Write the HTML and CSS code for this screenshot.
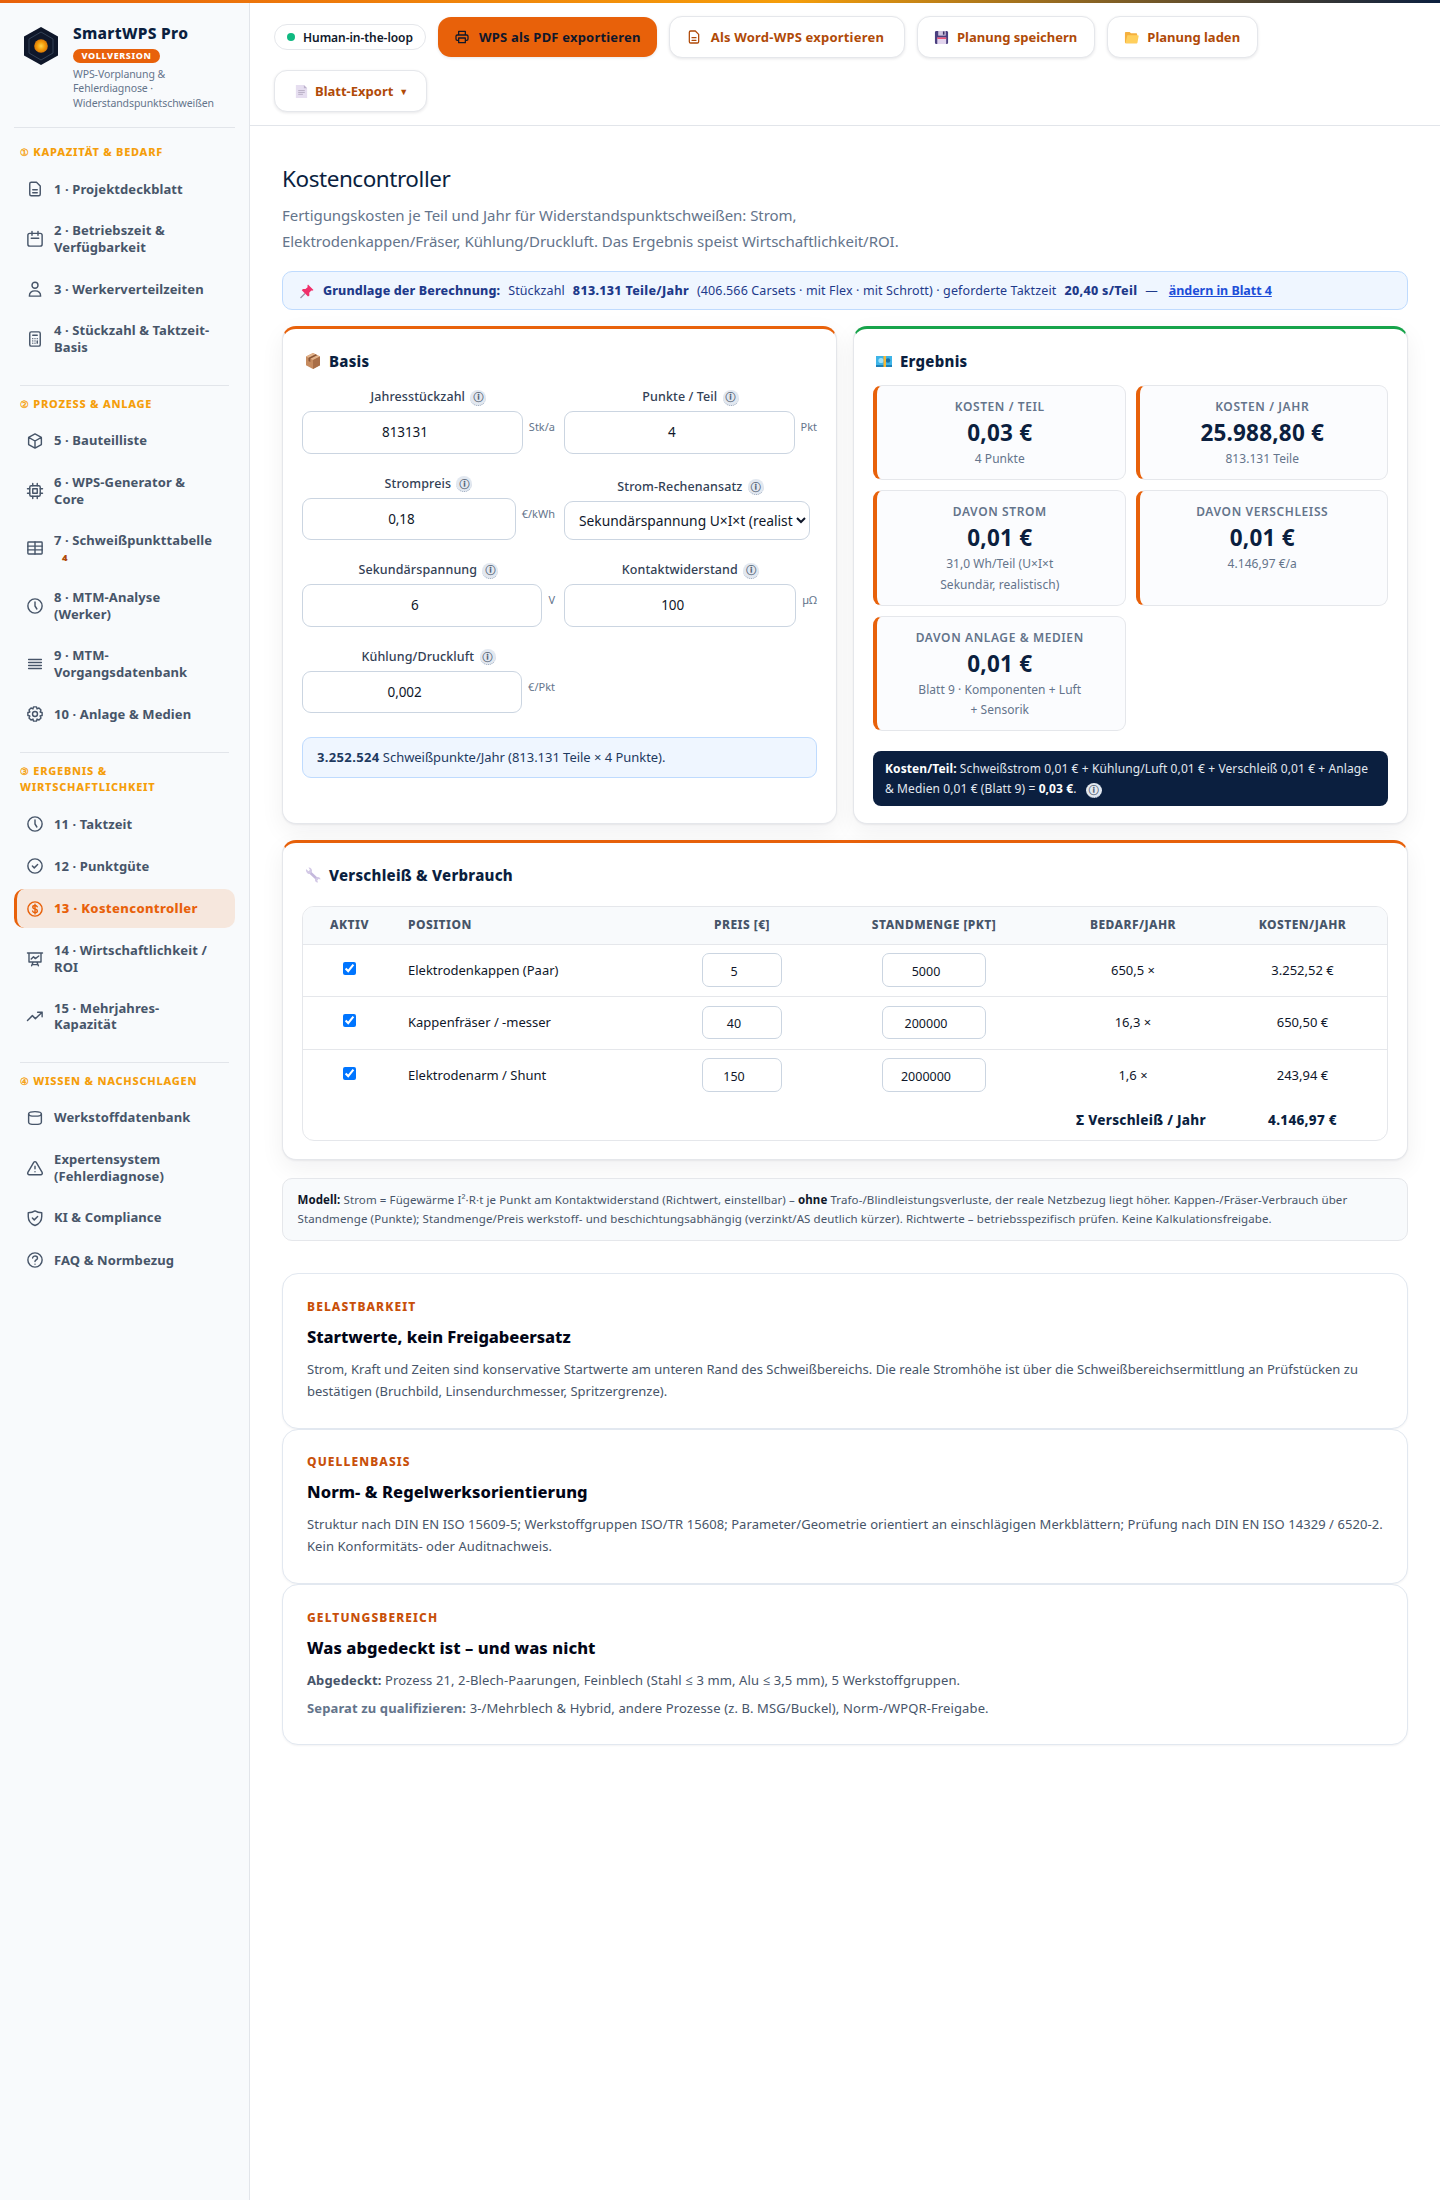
FILE: index.html
```html
<!DOCTYPE html>
<html lang="de">
<head>
<meta charset="UTF-8" />
<meta name="viewport" content="width=device-width,initial-scale=1.0" />
<title>SmartWPS Pro – Kostencontroller</title>
<link rel="stylesheet" href="styles.css">
</head>
<body>
<div class="topline"></div>
<div class="app">
  <aside class="sidebar">
    <div class="brand">
      <svg class="logo" viewBox="0 0 34 38"><defs><radialGradient id="glow"><stop offset="0" stop-color="#fcd34d"/><stop offset=".55" stop-color="#f59e0b"/><stop offset="1" stop-color="#d97706"/></radialGradient></defs><path d="M17 0l17 9.500v19L17 38 0 28.500v-19z" fill="#0f172a"/><path d="M17 5l12 7v14l-12 7-12-7V12z" fill="none" stroke="#334155"/><circle cx="17" cy="19" r="6.800" fill="url(#glow)"/></svg>
      <div>
        <div class="brand-name">SmartWPS Pro</div>
        <span class="brand-badge">VOLLVERSION</span>
        <div class="brand-sub">WPS-Vorplanung &amp;<br>Fehlerdiagnose ·<br>Widerstandspunktschweißen</div>
      </div>
    </div>

    <nav>
      <div class="group">
        <h4><span class="num">①</span> Kapazität &amp; Bedarf</h4>
        <a class="item"><svg class="ico" viewBox="0 0 24 24"><path d="M14 3H7a2 2 0 0 0-2 2v14a2 2 0 0 0 2 2h10a2 2 0 0 0 2-2V8zM9 13h6M9 17h6"/></svg><span>1 · Projektdeckblatt</span></a>
        <a class="item"><svg class="ico" viewBox="0 0 24 24"><rect x="2.500" y="4.500" width="19" height="17" rx="2.500"/><path d="M8 2v5M16 2v5M7 11h10"/></svg><span>2 · Betriebszeit &amp; Verfügbarkeit</span></a>
        <a class="item"><svg class="ico" viewBox="0 0 24 24"><circle cx="12" cy="7" r="4"/><path d="M4.500 21.500c0-4.500 3.300-7 7.500-7s7.500 2.500 7.500 7z"/></svg><span>3 · Werkerverteilzeiten</span></a>
        <a class="item"><svg class="ico" viewBox="0 0 24 24"><rect x="5" y="2.500" width="14" height="19" rx="2"/><path d="M9 7h6M9 11.500h0M12 11.500h0M15 11.500h0M9 14.500h0M12 14.500h0M9 17.500h0M12 17.500h0M15 14.500v3"/></svg><span>4 · Stückzahl &amp; Taktzeit-Basis</span></a>
      </div>
      <div class="group">
        <h4><span class="num">②</span> Prozess &amp; Anlage</h4>
        <a class="item"><svg class="ico" viewBox="0 0 24 24"><path d="M12 2.500l8.500 4.700v9.600L12 21.500l-8.500-4.700V7.200zM3.500 7.200L12 12l8.500-4.800M12 12v9.500"/></svg><span>5 · Bauteilliste</span></a>
        <a class="item"><svg class="ico" viewBox="0 0 24 24"><rect x="5" y="5" width="14" height="14" rx="2"/><rect x="9" y="9" width="6" height="6"/><path d="M9 2v3M15 2v3M9 19v3M15 19v3M2 9h3M2 15h3M19 9h3M19 15h3"/></svg><span>6 · WPS-Generator &amp; Core</span></a>
        <a class="item"><svg class="ico" viewBox="0 0 24 24"><rect x="2.500" y="4" width="19" height="16" rx="1"/><path d="M2.500 9.500h19M2.500 14.500h19M12 4v16"/></svg><span>7 · Schweißpunkttabelle <b class="count">4</b></span></a>
        <a class="item"><svg class="ico" viewBox="0 0 24 24"><circle cx="12" cy="12" r="9.500"/><path d="M12 6.500V12l2.500 4"/></svg><span>8 · MTM-Analyse (Werker)</span></a>
        <a class="item"><svg class="ico" viewBox="0 0 24 24"><path d="M3.500 6h17M3.500 10h17M3.500 14h17M3.500 18h17"/></svg><span>9 · MTM-Vorgangsdatenbank</span></a>
        <a class="item"><svg class="ico" viewBox="0 0 24 24"><circle cx="12" cy="12" r="3.300"/><path d="M10 2.500h4l.7 2.700 2.600-1.200 2.700 2.700-1.200 2.600 2.700.7v4l-2.700.7 1.200 2.600-2.700 2.700-2.600-1.200-.7 2.700h-4l-.7-2.700-2.600 1.200L4 17.300l1.200-2.600-2.700-.7v-4l2.700-.7L4 6.700 6.700 4l2.600 1.200z"/></svg><span>10 · Anlage &amp; Medien</span></a>
      </div>
      <div class="group">
        <h4><span class="num">③</span> Ergebnis &amp; Wirtschaftlichkeit</h4>
        <a class="item"><svg class="ico" viewBox="0 0 24 24"><circle cx="12" cy="12" r="9.500"/><path d="M12 6.500V12l2.500 4"/></svg><span>11 · Taktzeit</span></a>
        <a class="item"><svg class="ico" viewBox="0 0 24 24"><circle cx="12" cy="12" r="9.500"/><path d="M8.500 12l2.500 2.500L15.500 10"/></svg><span>12 · Punktgüte</span></a>
        <a class="item active"><svg class="ico" viewBox="0 0 24 24"><circle cx="12" cy="12" r="9.500"/><path d="M15 9c-.5-1.200-1.700-1.700-3-1.700-1.700 0-3 .8-3 2.200 0 3.200 6.200 1.700 6.200 5 0 1.400-1.500 2.200-3.200 2.200-1.500 0-2.800-.6-3.200-1.900M12 5.500v13"/></svg><span>13 · Kostencontroller</span></a>
        <a class="item"><svg class="ico" viewBox="0 0 24 24"><path d="M2 4h20M4 4v12h16V4M9.500 16l-2 5M14.500 16l2 5M8 19.500h8M7 12l3-3 2.500 2.500L17 8"/></svg><span>14 · Wirtschaftlichkeit / ROI</span></a>
        <a class="item"><svg class="ico" viewBox="0 0 24 24"><path d="M2 18l6.500-6.500 4 4L21.500 7M15.500 7h6v6"/></svg><span>15 · Mehrjahres-Kapazität</span></a>
      </div>
      <div class="group">
        <h4><span class="num">④</span> Wissen &amp; Nachschlagen</h4>
        <a class="item"><svg class="ico" viewBox="0 0 24 24"><ellipse cx="12" cy="6.500" rx="8.500" ry="3"/><path d="M3.500 6.500v11c0 1.700 3.800 3 8.500 3s8.500-1.300 8.500-3v-11"/></svg><span>Werkstoffdatenbank</span></a>
        <a class="item"><svg class="ico" viewBox="0 0 24 24"><path d="M12 3.500c.7 0 1.300.3 1.700 1l7.800 13.200c.8 1.400-.1 3.300-1.800 3.300H4.300c-1.700 0-2.600-1.900-1.800-3.300l7.800-13.200c.4-.7 1-1 1.700-1zM12 9.500v3.500M12 17h0"/></svg><span>Expertensystem (Fehlerdiagnose)</span></a>
        <a class="item"><svg class="ico" viewBox="0 0 24 24"><path d="M12 2.500c2.700 1.800 5.700 2.500 9 2.500v5c0 6-3.500 10-9 12-5.500-2-9-6-9-12V5c3.300 0 6.300-.7 9-2.500zM8.500 12l2.500 2.500L15.500 10"/></svg><span>KI &amp; Compliance</span></a>
        <a class="item"><svg class="ico" viewBox="0 0 24 24"><circle cx="12" cy="12" r="9.500"/><path d="M8.800 9.300c.3-1.700 1.600-2.600 3.200-2.600 1.900 0 3.300 1.100 3.300 2.800 0 2.300-3.300 2.300-3.300 4.500M12 17.500h0"/></svg><span>FAQ &amp; Normbezug</span></a>
      </div>
    </nav>
  </aside>

  <div class="main">
    <header class="toolbar">
      <span class="chip"><i class="dot"></i>Human-in-the-loop</span>
      <button class="btn primary"><svg class="ico" viewBox="0 0 24 24"><path d="M7 9V3.500h10V9M7 17H5a2 2 0 0 1-2-2v-4a2 2 0 0 1 2-2h14a2 2 0 0 1 2 2v4a2 2 0 0 1-2 2h-2M7 13.500h10v7H7z"/></svg>WPS als PDF exportieren</button>
      <button class="btn word"><svg class="ico" viewBox="0 0 24 24"><path d="M14 3H7a2 2 0 0 0-2 2v14a2 2 0 0 0 2 2h10a2 2 0 0 0 2-2V8zM9 13h6M9 17h6"/></svg>Als Word-WPS exportieren</button>
      <button class="btn"><svg class="emo" viewBox="0 0 16 16"><path d="M1 2.500A1.500 1.500 0 0 1 2.500 1H14l1 1v11.500a1.500 1.500 0 0 1-1.500 1.500h-11A1.500 1.500 0 0 1 1 13.500z" fill="#4a3f7f"/><path d="M4.500 1h8v5h-8z" fill="#cfc6e0"/><path d="M9.500 1.500h1.700v3.500H9.500z" fill="#3b2f66"/><path d="M3.500 8h9.500v7H3.500z" fill="#e2d5ee"/><path d="M3.500 8h9.500v1.500H3.500z" fill="#ef4466"/></svg>Planung speichern</button>
      <button class="btn"><svg class="emo" viewBox="0 0 16 16"><path d="M1 3a1 1 0 0 1 1-1h4l1.500 1.500H13a1 1 0 0 1 1 1V14H2a1 1 0 0 1-1-1z" fill="#f5b03e"/><path d="M3.600 5.500h11a1 1 0 0 1 1 1.200l-1.300 6.500a1 1 0 0 1-1 .8H1.500z" fill="#ffcf5c"/></svg>Planung laden</button>
      <button class="btn sheet"><svg class="emo" viewBox="0 0 16 16"><path d="M2 1h8.500L14 4.500V15H2z" fill="#e6def0"/><path d="M10.500 1L14 4.500h-3.500z" fill="#bdb3cc"/><path d="M4.500 7h7M4.500 9h7M4.500 11h5" stroke="#b6adc2"/></svg>Blatt-Export <span class="caret">▼</span></button>
    </header>

    <main class="content">
      <h1>Kostencontroller</h1>
      <p class="lead">Fertigungskosten je Teil und Jahr für Widerstandspunktschweißen: Strom, Elektrodenkappen/Fräser, Kühlung/Druckluft. Das Ergebnis speist Wirtschaftlichkeit/ROI.</p>

      <div class="basisbar">
        <svg class="emo" viewBox="0 0 16 16"><path d="M6 10.500L1.500 15" stroke="#9a93a8" stroke-width="1.300"/><path d="M9 1.500L14.500 7l-1.300.8-.9-.3-2.100 2.300.2 2.600-1.400 1.100L2.800 7.300l1.100-1.400 2.600.2L8.800 4l-.5-1z" fill="#f0306a"/></svg>
        <b>Grundlage der Berechnung:</b><span>Stückzahl</span><b class="val">813.131 Teile/Jahr</b><span>(406.566 Carsets · mit Flex · mit Schrott) · geforderte Taktzeit</span><b class="val">20,40 s/Teil</b><span class="dash">—</span><a href="#">ändern in Blatt 4</a>
      </div>

      <div class="cols">
        <section class="card">
          <h3><svg class="emo" viewBox="0 0 16 16"><path d="M8 0l7 3.500v8.700L8 16l-7-3.800V3.500z" fill="#c68b5f"/><path d="M8 0l7 3.500L8 7 1 3.500z" fill="#e3b48c"/><path d="M8 7v9l7-3.800V3.500z" fill="#a96e47"/><path d="M10.500 1.300l-7 3.500V8l1.800 1V5.700l7-3.500z" fill="#8a5636"/></svg>Basis</h3>
          <div class="fields">
            <div class="field"><label>Jahresstückzahl <i class="info">ⓘ</i></label><div class="inp"><input value="813131"><span>Stk/a</span></div></div>
            <div class="field"><label>Punkte / Teil <i class="info">ⓘ</i></label><div class="inp"><input value="4"><span>Pkt</span></div></div>
            <div class="field"><label>Strompreis <i class="info">ⓘ</i></label><div class="inp"><input value="0,18"><span>€/kWh</span></div></div>
            <div class="field"><label>Strom-Rechenansatz <i class="info">ⓘ</i></label><select><option>Sekundärspannung U×I×t (realistisch)</option></select></div>
            <div class="field"><label>Sekundärspannung <i class="info">ⓘ</i></label><div class="inp"><input value="6"><span>V</span></div></div>
            <div class="field"><label>Kontaktwiderstand <i class="info">ⓘ</i></label><div class="inp"><input value="100"><span>µΩ</span></div></div>
            <div class="field"><label>Kühlung/Druckluft <i class="info">ⓘ</i></label><div class="inp"><input value="0,002"><span>€/Pkt</span></div></div>
          </div>
          <div class="hint"><b>3.252.524</b> Schweißpunkte/Jahr (813.131 Teile × 4 Punkte).</div>
        </section>

        <section class="card green">
          <h3><svg class="emo" viewBox="0 0 16 16"><path d="M0 3h16v11H0z" fill="#1c7fb8"/><path d="M0 3h16v9H0z" fill="#3db4e7"/><circle cx="5" cy="7.500" r="2.600" fill="#9ee0fa"/><circle cx="12" cy="7.500" r="2.200" fill="#1c6f9f"/><path d="M7.500 3h2.500v11H7.500z" fill="#f7b733"/></svg>Ergebnis</h3>
          <div class="tiles">
            <div class="tile"><div class="t-label">Kosten / Teil</div><div class="t-value">0,03 €</div><div class="t-sub">4 Punkte</div></div>
            <div class="tile"><div class="t-label">Kosten / Jahr</div><div class="t-value">25.988,80 €</div><div class="t-sub">813.131 Teile</div></div>
            <div class="tile"><div class="t-label">davon Strom</div><div class="t-value">0,01 €</div><div class="t-sub">31,0 Wh/Teil (U×I×t<br>Sekundär, realistisch)</div></div>
            <div class="tile"><div class="t-label">davon Verschleiss</div><div class="t-value">0,01 €</div><div class="t-sub">4.146,97 €/a</div></div>
            <div class="tile"><div class="t-label">davon Anlage &amp; Medien</div><div class="t-value">0,01 €</div><div class="t-sub">Blatt 9 · Komponenten + Luft<br>+ Sensorik</div></div>
          </div>
          <div class="formula"><b>Kosten/Teil:</b> Schweißstrom 0,01 € + Kühlung/Luft 0,01 € + Verschleiß 0,01 € + Anlage<br>&amp; Medien 0,01 € (Blatt 9) = <b>0,03 €</b>. <i class="info">ⓘ</i></div>
        </section>
      </div>

      <section class="card wear">
        <h3><svg class="emo" viewBox="0 0 16 16"><path d="M4 4.500l8.500 8" stroke="#c4b8dc" stroke-width="2.600"/><path d="M1 2l2.500 2.300L5 3 3.500.5c2-.3 4 1.500 3.500 4L5 7C2.500 7.200.6 5 1 2zM15.500 12.500l-2-.5-1.200 1.300.7 2.200c-2 .3-3.500-1.500-3-3.500l2-2c2-.5 3.500.8 3.500 2.500z" fill="#d3c9e6"/></svg>Verschleiß &amp; Verbrauch</h3>
        <div class="tablewrap">
          <table>
            <colgroup><col class="c-on"><col class="c-pos"><col class="c-price"><col class="c-amount"><col class="c-need"><col class="c-cost"></colgroup>
            <thead>
              <tr><th>Aktiv</th><th class="left">Position</th><th>Preis [€]</th><th>Standmenge [Pkt]</th><th>Bedarf/Jahr</th><th>Kosten/Jahr</th></tr>
            </thead>
            <tbody>
              <tr><td><input type="checkbox" checked></td><td class="left">Elektrodenkappen (Paar)</td><td><input class="w80" value="5"></td><td><input class="w104" value="5000"></td><td>650,5 ×</td><td>3.252,52 €</td></tr>
              <tr><td><input type="checkbox" checked></td><td class="left">Kappenfräser / -messer</td><td><input class="w80" value="40"></td><td><input class="w104" value="200000"></td><td>16,3 ×</td><td>650,50 €</td></tr>
              <tr><td><input type="checkbox" checked></td><td class="left">Elektrodenarm / Shunt</td><td><input class="w80" value="150"></td><td><input class="w104" value="2000000"></td><td>1,6 ×</td><td>243,94 €</td></tr>
            </tbody>
            <tfoot>
              <tr><td colspan="5" class="right">Σ Verschleiß / Jahr</td><td>4.146,97 €</td></tr>
            </tfoot>
          </table>
        </div>
      </section>

      <div class="model"><b>Modell:</b> Strom = Fügewärme I²·R·t je Punkt am Kontaktwiderstand (Richtwert, einstellbar) – <b>ohne</b> Trafo-/Blindleistungsverluste, der reale Netzbezug liegt höher. Kappen-/Fräser-Verbrauch über<br>Standmenge (Punkte); Standmenge/Preis werkstoff- und beschichtungsabhängig (verzinkt/AS deutlich kürzer). Richtwerte – betriebsspezifisch prüfen. Keine Kalkulationsfreigabe.</div>

      <div class="notes">
        <article class="note">
          <div class="eyebrow">Belastbarkeit</div>
          <h2>Startwerte, kein Freigabeersatz</h2>
          <p>Strom, Kraft und Zeiten sind konservative Startwerte am unteren Rand des Schweißbereichs. Die reale Stromhöhe ist über die Schweißbereichsermittlung an Prüfstücken zu<br>bestätigen (Bruchbild, Linsendurchmesser, Spritzergrenze).</p>
        </article>
        <article class="note sources">
          <div class="eyebrow">Quellenbasis</div>
          <h2>Norm- &amp; Regelwerksorientierung</h2>
          <p>Struktur nach DIN EN ISO 15609-5; Werkstoffgruppen ISO/TR 15608; Parameter/Geometrie orientiert an einschlägigen Merkblättern; Prüfung nach DIN EN ISO 14329 / 6520-2.<br>Kein Konformitäts- oder Auditnachweis.</p>
        </article>
        <article class="note scope">
          <div class="eyebrow">Geltungsbereich</div>
          <h2>Was abgedeckt ist – und was nicht</h2>
          <p><b>Abgedeckt:</b> Prozess 21, 2-Blech-Paarungen, Feinblech (Stahl ≤ 3 mm, Alu ≤ 3,5 mm), 5 Werkstoffgruppen.</p>
          <p><b class="muted">Separat zu qualifizieren:</b> 3-/Mehrblech &amp; Hybrid, andere Prozesse (z. B. MSG/Buckel), Norm-/WPQR-Freigabe.</p>
        </article>
      </div>
    </main>
  </div>
</div>
</body>
</html>
```
FILE: styles.css
```css
* { box-sizing:border-box; }
body { margin:0; font-family:"Noto Sans", "Open Sans", sans-serif; font-size:13px; color:#0f172a; background:#fff; }
h1, h2, h3, h4, p { margin:0; }
i { font-style:normal; }
.topline { height:3px; background:linear-gradient(90deg, #e8610a 0%, #f59e0b 55%, #0b1f3f 100%); }
.app { display:flex; min-height:2197px; }

/* Sidebar */
.sidebar { flex:none; width:250px; padding:0 14px; background:#f8fafc; border-right:1px solid #e2e5ea; }
.brand { display:flex; gap:15px; height:125px; padding:20px 0 0 10px; border-bottom:1px solid #e2e5ea; }
.logo { flex:none; width:34px; height:38px; margin-top:4px; }
.brand-name { font-size:15.500px; font-weight:800; line-height:20px; letter-spacing:.3px; color:#0b1f3f; white-space:nowrap; }
.brand-badge { display:block; width:87px; height:14px; margin:6px 0 4px; border-radius:999px; background:#e8610a; color:#fff; font-size:9px; font-weight:800; line-height:14px; letter-spacing:.6px; text-align:center; }
.brand-sub { font-size:10.500px; line-height:14.400px; letter-spacing:-.09px; color:#64748b; white-space:nowrap; }
.group h4 { margin:18px 6px 8.600px; padding-top:10px; border-top:1px solid #e2e5ea; font-size:11px; font-weight:800; line-height:16.800px; letter-spacing:.75px; text-transform:uppercase; color:#f59e0b; }
.group:first-child h4 { border-top:0; margin-top:6.300px; }
.num { font-family:"DejaVu Sans", sans-serif; font-size:10px; font-weight:400; line-height:1; -webkit-text-stroke:.3px #f59e0b; }
.item { display:flex; align-items:center; gap:10px; min-height:39.200px; margin-bottom:3px; padding:10.600px 20px 10.600px 9px; border-left:3px solid transparent; border-radius:10px; color:#475569; font-size:13px; font-weight:700; line-height:16.800px; letter-spacing:.1px; }
.item.active { background:#f6e7dd; border-left-color:#e8610a; color:#e8610a; font-weight:800; letter-spacing:.35px; }
.ico { flex:none; width:18px; height:18px; margin:-2px 0; fill:none; stroke:currentColor; stroke-width:1.900; stroke-linecap:round; stroke-linejoin:round; }
.count { margin-left:8px; font-size:9.500px; line-height:1; color:#b04a08; }

/* Toolbar */
.main { flex:1; min-width:0; }
.toolbar { display:flex; flex-wrap:wrap; align-items:center; gap:12px; padding:13px 24px; border-bottom:1px solid #e2e5ea; }
.chip { display:flex; align-items:center; gap:8px; width:152px; height:26px; padding-left:12px; border:1px solid #e5e7eb; border-radius:999px; font-size:12px; font-weight:600; letter-spacing:-.05px; white-space:nowrap; }
.dot { width:8px; height:8px; border-radius:50%; background:#10b981; }
.btn { display:flex; align-items:center; gap:8px; height:42px; padding:0 17px 0 16px; border:1px solid #e5e7eb; border-radius:13px; background:#fff; box-shadow:0 1px 3px rgba(15,23,42,.1); color:#b04a08; font-family:inherit; font-size:13px; font-weight:700; white-space:nowrap; }
.btn .ico { width:16px; height:16px; }
.btn.primary { height:40px; padding:0 16px; gap:9px; border:0; background:#e8610a; color:#0f172a; letter-spacing:.2px; }
.btn.word { padding:0 20px 0 16px; gap:9px; letter-spacing:.2px; }
.btn.sheet { padding:0 18px 0 19px; gap:6px; }
.btn .emo { width:15px; height:15px; }
.emo { flex:none; width:16px; height:16px; }
.caret { font-size:9px; }

/* Content */
.content { padding:32px; }
h1 { height:36px; margin-top:2px; font-size:22.500px; font-weight:400; line-height:38px; letter-spacing:-.45px; color:#0b1f3f; }
.lead { width:640px; margin-top:6px; font-size:15px; line-height:26px; letter-spacing:-.05px; color:#64748b; }
.basisbar { display:flex; align-items:center; gap:8px; height:39px; margin:17px 0 16px; padding:0 16px; border:1px solid #bfdbfe; border-radius:10px; background:#eff6ff; color:#1e3a8a; font-size:12.500px; letter-spacing:.12px; white-space:nowrap; }
.basisbar b { font-weight:800; }
.basisbar .val { letter-spacing:.3px; }
.basisbar .dash { letter-spacing:3px; }
.basisbar a { color:#1d4ed8; font-weight:700; letter-spacing:-.05px; }
.cols { display:grid; grid-template-columns:1fr 1fr; gap:16px; }
.card { height:498px; padding:20px 19px; border:1px solid #e5e7eb; border-top:3px solid #e8610a; border-radius:14px; background:#fff; box-shadow:0 1px 2px rgba(15,23,42,.06), 0 8px 24px rgba(15,23,42,.06); }
.card.green { border-top-color:#16a34a; }
.card h3 { display:flex; align-items:center; gap:8px; height:24px; margin-left:3px; font-size:15px; font-weight:800; line-height:23px; letter-spacing:.25px; color:#0b1f3f; }
.fields { display:grid; grid-template-columns:253px 253px; gap:20px 9px; align-items:end; margin-top:14px; }
.field label { display:block; height:24px; font-size:12.500px; font-weight:500; line-height:20px; letter-spacing:.1px; text-align:center; color:#334155; }
.info { display:inline-flex; align-items:center; justify-content:center; width:16px; height:16px; margin-left:2px; border-bottom:1px dotted #94a3b8; border-radius:50%; background:#e2e8f0; color:#475569; font-family:"Noto Sans CJK JP", sans-serif; font-size:10px; font-weight:700; line-height:1; -webkit-text-stroke:.25px #475569; vertical-align:0; }
.inp { display:flex; gap:6px; }
.inp span { font-size:11px; line-height:32px; color:#64748b; white-space:nowrap; }
input, select { border:1px solid #cbd5e1; border-radius:9px; background:#fff; color:#0f172a; font-family:inherit; font-size:13.500px; }
.inp input { flex:1; min-width:0; height:42.500px; padding:0 28px 0 13px; letter-spacing:-.1px; text-align:center; }
select { display:block; width:246px; height:39.500px; padding:0 0 0 10px; font-size:13.800px; }
.hint { height:41px; margin-top:24px; padding:0 14px; border:1px solid #bfdbfe; border-radius:9px; background:#eff6ff; color:#1e3a5f; font-size:13px; line-height:39px; letter-spacing:-.04px; }
.hint b { letter-spacing:.35px; }
.tiles { display:grid; grid-template-columns:1fr 1fr; gap:10px; margin-top:12px; }
.tile { min-height:95px; padding:11px 20px 10px 18px; border:1px solid #e5e7eb; border-left:4px solid #e8610a; border-radius:9px; background:#fbfcfe; text-align:center; white-space:nowrap; }
.t-label { font-size:12px; font-weight:600; line-height:20px; letter-spacing:.6px; text-transform:uppercase; color:#64748b; }
.t-value { font-size:22.500px; font-weight:700; line-height:32px; letter-spacing:.2px; color:#0b1f3f; }
.t-sub { font-size:12px; line-height:20.300px; letter-spacing:.04px; color:#64748b; }
.formula { height:55px; margin-top:20px; padding:8px 12px; border-radius:8px; background:#0b1f3f; color:#e2e8f0; font-size:12px; line-height:19.200px; letter-spacing:.1px; white-space:nowrap; }
.formula b { color:#fff; }
.formula .info { height:15px; margin-left:6px; vertical-align:-1px; }

/* Wear table */
.wear { height:320px; margin-top:16px; }
.tablewrap { height:235px; margin-top:19px; border:1px solid #e5e7eb; border-radius:12px; overflow:hidden; }
table { width:100%; table-layout:fixed; border-collapse:collapse; }
.c-on { width:93px; }
.c-pos { width:268px; }
.c-price { width:156px; }
.c-amount { width:228px; }
.c-need { width:170px; }
.c-cost { width:169px; }
th { height:37px; padding:0 12px 1px; border-bottom:1px solid #e5e7eb; background:#f8fafc; font-size:12px; font-weight:800; letter-spacing:.45px; text-transform:uppercase; color:#475569; }
td { height:52.500px; padding:0 12px 1px; border-bottom:1px solid #e5e7eb; font-size:13px; text-align:center; }
tbody tr:last-child td, tfoot td { border-bottom:0; }
tfoot td { height:38px; padding-bottom:2px; font-size:13.500px; font-weight:800; letter-spacing:.28px; color:#0b1f3f; }
th.left, td.left { text-align:left; }
td.right { text-align:right; }
td input[type=checkbox] { width:13px; height:13px; margin:0 0 3px; }
.w80, .w104 { height:33.500px; padding:3px 24px 0 8px; border-radius:7px; font-size:12.500px; text-align:center; }
.w80 { width:80px; }
.w104 { width:104px; }

.model { height:63px; margin-top:18px; padding:11px 14.500px; border:1px solid #e5e7eb; border-radius:10px; background:#f8fafc; color:#475569; font-size:11.500px; line-height:19.200px; letter-spacing:.1px; white-space:nowrap; }
.model b { color:#0f172a; }
.notes { margin-top:32px; }
.note { height:155.500px; padding:22.500px 24px; border:1px solid #e2e8f0; border-radius:16px; background:#fff; box-shadow:0 1px 2px rgba(15,23,42,.05); white-space:nowrap; }
.note.scope { height:161px; }
.eyebrow { font-size:12px; font-weight:800; line-height:20px; letter-spacing:1.100px; text-transform:uppercase; color:#c8500a; }
.note h2 { margin:7px 0 8px; font-size:16.500px; font-weight:800; line-height:26px; letter-spacing:-.05px; color:#020617; }
.note.sources h2, .note.scope h2 { letter-spacing:.08px; }
.note p { font-size:13px; line-height:22px; letter-spacing:.02px; color:#475569; }
.note.sources p { letter-spacing:.07px; }
.note.scope p { letter-spacing:.12px; }
.note p + p { margin-top:6px; }
.muted { color:#64748b; }
```
